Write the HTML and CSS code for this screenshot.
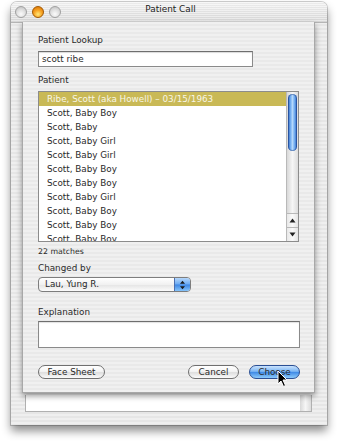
FILE: index.html
```html
<!DOCTYPE html>
<html>
<head>
<meta charset="utf-8">
<link rel="stylesheet" href="styles.css">
</head>
<body>
<div class="window">
  <div class="titlebar">
    <div class="lights">
      <span class="light off"></span>
      <span class="light min"></span>
      <span class="light off"></span>
    </div>
    <div class="title">Patient Call</div>
  </div>
  <div class="content">
    <div class="sheet">
      <div class="label">Patient Lookup</div>
      <div class="field">scott ribe</div>
      <div class="label gap-patient">Patient</div>
      <div class="list">
        <div class="rows">
          <div class="row sel">Ribe, Scott (aka Howell) – 03/15/1963</div>
          <div class="row">Scott, Baby Boy</div>
          <div class="row">Scott, Baby</div>
          <div class="row">Scott, Baby Girl</div>
          <div class="row">Scott, Baby Girl</div>
          <div class="row">Scott, Baby Boy</div>
          <div class="row">Scott, Baby Boy</div>
          <div class="row">Scott, Baby Girl</div>
          <div class="row">Scott, Baby Boy</div>
          <div class="row">Scott, Baby Boy</div>
          <div class="row">Scott, Baby Boy</div>
        </div>
        <div class="scrollbar">
          <div class="track"><div class="thumb"></div></div>
          <div class="arrow up"><svg width="7" height="5" viewBox="0 0 7 5"><path d="M3.5 0.5 L6.5 4.5 L0.5 4.5 Z" fill="#222"/></svg></div>
          <div class="arrow down"><svg width="7" height="5" viewBox="0 0 7 5"><path d="M0.5 0.5 L6.5 0.5 L3.5 4.5 Z" fill="#222"/></svg></div>
        </div>
      </div>
      <div class="matches">22 matches</div>
      <div class="label gap-changed">Changed by</div>
      <div class="popup">
        <span class="popup-text">Lau, Yung R.</span>
        <span class="popup-arrows"><svg width="7" height="10" viewBox="0 0 7 10"><path d="M3.5 0.8 L6 3.8 L1 3.8 Z M1 6.2 L6 6.2 L3.5 9.2 Z" fill="#1a1a1a"/></svg></span>
      </div>
      <div class="label gap-expl">Explanation</div>
      <div class="textarea"></div>
      <div class="buttons">
        <span class="btn">Face Sheet</span>
        <span class="spacer"></span>
        <span class="btn cancel">Cancel</span>
        <span class="btn default">Choose</span>
      </div>
      <svg class="cursor" width="12" height="18" viewBox="0 0 12 18"><path d="M1 1 L1 14 L4 11 L6.5 16.5 L8.5 15.5 L6 10 L10 10 Z" fill="#000" stroke="#fff" stroke-width="1"/></svg>
    </div>
    <div class="under">
      <div class="under-list"></div>
      <div class="under-scroll"></div>
    </div>
  </div>
</div>
</body>
</html>
```
FILE: styles.css
```css
html, body {
  margin: 0;
  padding: 0;
  background: #ffffff;
}
body {
  width: 337px;
  height: 442px;
  overflow: hidden;
  font-family: "DejaVu Sans", "Liberation Sans", sans-serif;
  font-size: 8.8px;
  color: #2a2a2a;
}
.window {
  margin: 2px 0 0 11px;
  width: 316px;
  height: 423px;
  border-radius: 6px 6px 0 0;
  background: repeating-linear-gradient(to bottom, #efefef 0 2px, #e6e6e6 2px 4px);
  box-shadow: 0 6px 10px rgba(0,0,0,0.45), 0 0 0 1px rgba(0,0,0,0.18);
  display: flex;
  flex-direction: column;
}
.titlebar {
  height: 20px;
  flex: none;
  position: relative;
  border-radius: 6px 6px 0 0;
  background:
    repeating-linear-gradient(to bottom, rgba(255,255,255,0.35) 0 1px, rgba(0,0,0,0.03) 1px 2px),
    linear-gradient(to bottom, #f4f4f4, #dcdcdc);
  display: flex;
  align-items: center;
}
.lights {
  display: flex;
  gap: 5px;
  padding-left: 4px;
}
.light {
  width: 12px;
  height: 12px;
  border-radius: 50%;
  box-sizing: border-box;
}
.light.off {
  background: radial-gradient(circle at 50% 70%, #fbfbfb 0, #e2e2e2 45%, #bdbdbd 100%);
  border: 1px solid #a0a0a0;
}
.light.min {
  background: radial-gradient(circle at 50% 72%, #ffe87a 0, #f7a526 45%, #d66c00 100%);
  border: 1px solid #a15800;
}
.title {
  position: absolute;
  left: 0;
  right: 0;
  top: 1px;
  text-align: center;
  font-size: 8.9px;
  line-height: 12px;
  color: #222;
  padding-left: 3px;
}
.content {
  flex: 1;
  display: flex;
  flex-direction: column;
  border-top: 1px solid #b5b5b5;
}
.sheet {
  position: relative;
  margin-left: 11px;
  width: 293px;
  box-sizing: border-box;
  height: 371px;
  margin-top: -1px;
  padding: 12px 15px 0 15px;
  background: repeating-linear-gradient(to bottom, #f0f0f0 0 2px, #e9e9e9 2px 4px);
  border: 1px solid #a8a8a8;
  border-top: none;
  box-shadow: 0 3px 6px rgba(0,0,0,0.4);
  z-index: 1;
}
.label {
  line-height: 12px;
}
.field {
  margin-top: 5px;
  width: 215px;
  height: 16px;
  box-sizing: border-box;
  border: 1px solid #8a8a8a;
  border-top-color: #6e6e6e;
  background: #fff;
  line-height: 14px;
  padding-left: 3px;
  box-shadow: inset 0 1px 1px rgba(0,0,0,0.15);
}
.gap-patient { margin-top: 7px; }
.list {
  margin-top: 5px;
  height: 151px;
  box-sizing: border-box;
  border: 1px solid #8c8c8c;
  background: #fff;
  display: flex;
  overflow: hidden;
}
.rows {
  flex: 1;
  overflow: hidden;
}
.row {
  height: 14px;
  line-height: 14px;
  padding-left: 8px;
  white-space: nowrap;
}
.row.sel {
  background: #c9b956;
  color: #f8f6e6;
}
.scrollbar {
  width: 11px;
  flex: none;
  display: flex;
  flex-direction: column;
  border-left: 1px solid #b9b9b9;
}
.track {
  flex: 1;
  padding: 2px 1px 0 0;
  background: linear-gradient(to right, #d8d8d8, #f6f6f6 50%, #dcdcdc);
}
.thumb {
  height: 57px;
  margin-left: 1px;
  border-radius: 5px;
  background: linear-gradient(to right, #2d5fb8 0, #6aa7ee 25%, #b4d8fb 50%, #6aa7ee 75%, #2d5fb8 100%);
  box-shadow: inset 0 0 0 1px rgba(20,50,120,0.45);
}
.arrow {
  height: 13px;
  display: flex;
  align-items: center;
  justify-content: center;
  background: linear-gradient(to right, #e8e8e8, #fafafa 50%, #e4e4e4);
  border-top: 1px solid #b8b8b8;
}
.matches {
  margin-top: 5px;
  font-size: 7.8px;
  line-height: 10px;
}
.gap-changed { margin-top: 5px; }
.popup {
  margin-top: 3px;
  width: 153px;
  height: 15px;
  box-sizing: border-box;
  border: 1px solid #7d7d7d;
  border-radius: 4px;
  background: linear-gradient(to bottom, #ffffff, #f1f1f1 50%, #e4e4e4 51%, #fbfbfb);
  display: flex;
  align-items: stretch;
  overflow: hidden;
}
.popup-text {
  flex: 1;
  line-height: 13px;
  padding-left: 6px;
}
.popup-arrows {
  width: 15px;
  display: flex;
  align-items: center;
  justify-content: center;
  border-left: 1px solid #4a6fb0;
  background: linear-gradient(to bottom, #b6d7fb, #6aaaf2 48%, #3c86e4 52%, #86c4fa);
}
.gap-expl { margin-top: 14px; }
.textarea {
  margin-top: 3px;
  width: 262px;
  height: 27px;
  box-sizing: border-box;
  border: 1px solid #8a8a8a;
  border-top-color: #6e6e6e;
  background: #fff;
  box-shadow: inset 0 1px 1px rgba(0,0,0,0.12);
}
.buttons {
  margin-top: 17px;
  display: flex;
  width: 262px;
  gap: 10px;
}
.spacer { flex: 1; }
.btn {
  height: 14px;
  box-sizing: border-box;
  border: 1px solid #6f6f6f;
  border-radius: 7px;
  line-height: 12px;
  text-align: center;
  background: linear-gradient(to bottom, #ffffff, #f4f4f4 45%, #dedede 55%, #fbfbfb);
  width: 67px;
}
.btn.cancel { width: 51px; }
.btn.default {
  width: 51px;
  border-color: #2b4f94;
  background: linear-gradient(to bottom, #c9e2fd, #7bb5f3 45%, #3f8ae6 52%, #8ccafb);
}
.cursor {
  position: absolute;
  left: 254px;
  top: 348px;
}
.under {
  display: flex;
  margin: 2px 0 0 14px;
  height: 16px;
  border: 1px solid #b0b0b0;
  border-top: none;
  width: 285px;
}
.under-list {
  flex: 1;
  background: #fff;
}
.under-scroll {
  width: 11px;
  background: linear-gradient(to right, #d8d8d8, #f6f6f6 50%, #dcdcdc);
}
```
